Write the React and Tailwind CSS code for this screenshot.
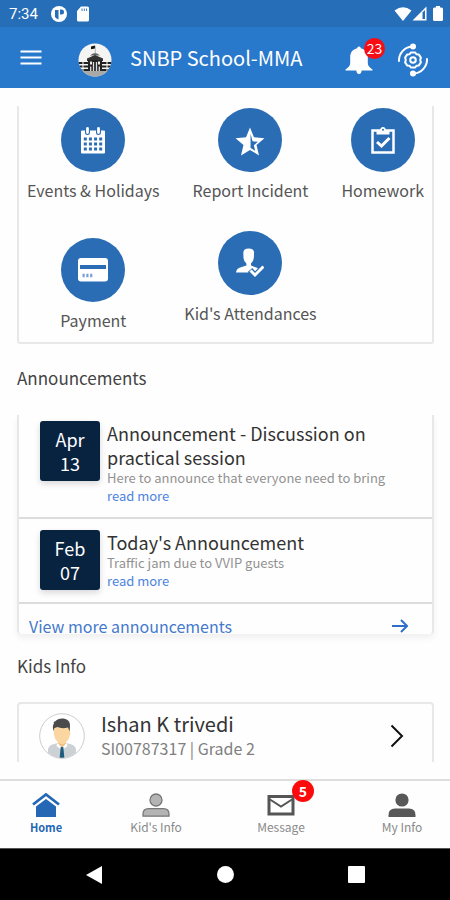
import React from "react";

function StatusBar() {
  return (
    <div className="flex h-[27px] shrink-0 items-center bg-[#276eb8] pl-[9px] pr-[7px] text-white">
      <span className="w-[42px] font-['Roboto',sans-serif] text-[15px] leading-5">7:34</span>
      <svg className="h-4 w-4" viewBox="0 0 16 16" aria-hidden="true">
        <circle cx="8" cy="8" r="8" fill="#fff" />
        <path d="M4 4h3.500v9.500A5.500 5.500 0 0 1 4 11z" fill="#276eb8" />
        <path d="M9 3.500h1.500a2.500 2.500 0 0 1 0 5H9z" fill="#276eb8" />
      </svg>
      <svg className="ml-[10px] h-4 w-3" viewBox="0 0 12 16" aria-hidden="true">
        <path d="M4 0.500h6.500a1.500 1.500 0 0 1 1.500 1.500v12a1.500 1.500 0 0 1-1.500 1.500h-9A1.500 1.500 0 0 1 0 14V5z" fill="#fff" />
        <path d="M5 2.500v2.500M7.300 2.500v2.500M9.600 2.500v2.500" stroke="#276eb8" strokeWidth="0.900" />
      </svg>
      <div className="ml-auto flex items-center">
        <svg className="h-[14px] w-[18px]" viewBox="0 0 18 14" aria-hidden="true">
          <path d="M9 14L0.500 3.500Q9-3 17.500 3.500z" fill="#fff" />
        </svg>
        <svg className="h-[15px] w-[15px]" viewBox="0 0 15 15" aria-hidden="true">
          <path d="M0.500 14.500L14.500 0.500v14z" fill="#fff" />
          <path d="M10.500 6.500l2.500-2.500v9h-2.500z" fill="#276eb8" />
        </svg>
        <svg className="ml-[6px] h-[15px] w-[10px]" viewBox="0 0 10 15" aria-hidden="true">
          <path d="M3 0h4v1.500h1.500A1.500 1.500 0 0 1 10 3v10.500A1.500 1.500 0 0 1 8.500 15h-7A1.500 1.500 0 0 1 0 13.500V3a1.500 1.500 0 0 1 1.500-1.500H3z" fill="#fff" />
        </svg>
      </div>
    </div>
  );
}

function SchoolLogo() {
  return (
    <svg className="ml-9 mt-1 h-[34px] w-[34px]" viewBox="0 0 34 34" role="img" aria-label="School logo">
      <defs>
        <clipPath id="logo-clip"><circle cx="17" cy="17" r="16.500" /></clipPath>
      </defs>
      <g clipPath="url(#logo-clip)">
        <rect width="34" height="34" fill="#f4f4f2" />
        <rect y="28" width="34" height="6" fill="#a9a9a6" />
        <path d="M13 3.500l4-1V5.500l-4 0.800z" fill="#111" />
        <path d="M17.300 3v7" stroke="#999" strokeWidth="0.700" />
        <path d="M12 12.500q5-5 10 0z" fill="#666" />
        <path d="M9 15.500l8-3.500 8 3.500v2.500H9z" fill="#333" />
        <rect x="10" y="17" width="14" height="11" fill="#222" />
        <path d="M0 20h10M24 20h10M1 23.500h9M24 23.500h9M2 27h8M24 27h8" stroke="#222" strokeWidth="2" />
        <path d="M5 19v9M29 19v9" stroke="#f4f4f2" strokeWidth="1" />
        <rect x="12" y="18.500" width="2" height="3" fill="#eee" />
        <rect x="20" y="18.500" width="2" height="3" fill="#eee" />
        <path d="M15.500 19v9M18.500 19v9M12.700 23.500v4.500M21.300 23.500v4.500" stroke="#ddd" strokeWidth="1.300" />
      </g>
    </svg>
  );
}

function Header() {
  return (
    <header className="flex h-[61px] shrink-0 items-center bg-[#2878cc] pl-5 pr-[22px] text-white">
      <button type="button" aria-label="Menu">
        <svg className="h-[18px] w-[22px]" viewBox="0 0 22 18">
          <path d="M0.500 2.500h21M0.500 8.500h21M0.500 14.500h21" stroke="#fff" strokeWidth="2.200" />
        </svg>
      </button>
      <SchoolLogo />
      <h1 className="ml-[18px] text-[20px] leading-7">SNBP School-MMA</h1>
      <button type="button" aria-label="Notifications, 23 new" className="relative ml-auto">
        <svg className="mt-1 h-7 w-7" viewBox="0 0 28 28">
          <path d="M14 0.500c1.200 0 1.700 0.700 1.700 1.800 4.600 0.900 7.100 4.300 7.100 9v5.700c0 2.800 1.800 4.500 4.700 6.500v1H0.500v-1c2.900-2 4.700-3.700 4.700-6.500v-5.700c0-4.700 2.500-8.100 7.100-9 0-1.100 0.500-1.800 1.700-1.800zM11.300 24h5.400q-0.200 3.900-2.700 3.900t-2.700-3.900z" fill="#fff" />
        </svg>
        <span className="absolute -top-1 left-[19px] flex h-[21px] w-[21px] items-center justify-center rounded-full bg-[#f80d14] text-[14px] leading-5">23</span>
      </button>
      <button type="button" aria-label="Settings" className="ml-[25px]">
        <svg className="mt-1 h-[34px] w-[30px]" viewBox="0 0 30 34" fill="none" stroke="#fff" strokeWidth="2">
          <path d="M1 18A14 14 0 0 1 14 3.500M29 16A14 14 0 0 1 16 30.500" strokeLinecap="round" />
          <circle cx="15" cy="3.500" r="3" fill="#fff" stroke="none" />
          <circle cx="15" cy="30.500" r="3" fill="#fff" stroke="none" />
          <path d="M12.800 9.500h4.400l1.200 1.800 2.300 0.100 2.200 3.200-0.700 2.400 0.700 2.400-2.200 3.200-2.300 0.100-1.200 1.800h-4.400l-1.200-1.800-2.300-0.100-2.200-3.200 0.700-2.400-0.700-2.400 2.200-3.200 2.300-0.100z" strokeLinejoin="round" />
          <circle cx="15" cy="17" r="2.800" />
        </svg>
      </button>
    </header>
  );
}

const CalendarIcon = () => (
  <svg className="-ml-px h-7 w-6" viewBox="0 0 24 28" aria-hidden="true">
    <path d="M1 4.500h22a1 1 0 0 1 1 1V26.500a1 1 0 0 1-1 1H1a1 1 0 0 1-1-1v-21a1 1 0 0 1 1-1z" fill="#fff" />
    <path d="M6.500 2.500v4M17.500 2.500v4" stroke="#2a6db4" strokeWidth="5" strokeLinecap="round" />
    <path d="M6.500 2.500v4M17.500 2.500v4" stroke="#fff" strokeWidth="2.800" strokeLinecap="round" />
    <path d="M2.800 13h18.400M2.800 18h18.400M2.800 23h18.400" stroke="#2a6db4" strokeWidth="3" strokeDasharray="3 2.130" />
  </svg>
);

const StarIcon = () => (
  <svg className="mt-1 h-[30px] w-[30px]" viewBox="0 0 28 28" aria-hidden="true">
    <path
      d="M14 0.500l3.700 9 9.800 0.900-7.400 6.500 2.300 9.600L14 21.400l-8.400 5.100 2.300-9.600L0.500 10.400l9.800-0.900zM14.500 6.500v13l4.300 2.600-1.200-5 3.800-3.300-5-0.400z"
      fill="#fff"
      fillRule="evenodd"
    />
  </svg>
);

const ClipboardIcon = () => (
  <svg className="h-7 w-6" viewBox="0 0 24 28" aria-hidden="true">
    <rect x="1.500" y="4.500" width="21" height="22" fill="none" stroke="#fff" strokeWidth="2.500" />
    <path d="M5.500 8.500V4.500h3.500q0.300-3.500 3-3.500t3 3.500h3.500v4z" fill="#fff" />
    <circle cx="12" cy="3.800" r="1" fill="#2a6db4" />
    <path d="M6 16l4.500 4 8-8" fill="none" stroke="#fff" strokeWidth="3" />
  </svg>
);

const CardIcon = () => (
  <svg className="h-6 w-[30px]" viewBox="0 0 30 24" aria-hidden="true">
    <rect width="30" height="23.500" rx="3" fill="#fff" />
    <rect x="2" y="7" width="26" height="4" fill="#2a6db4" />
    <path d="M4.500 17.500h9.800" stroke="#7c9fda" strokeWidth="3.600" strokeDasharray="2.200 1.600" />
  </svg>
);

const AttendanceIcon = () => (
  <svg className="h-[30px] w-7" viewBox="0 0 28 30" aria-hidden="true">
    <path d="M7.300 4.500Q7.500 0.500 12.700 0.500t5.400 4l-0.300 5.500q-0.500 4-2.800 5.500v2l6 2.300q2.500 1.200 3.200 4.700H0q0.500-3.700 3.500-4.800l6.900-2.200v-2Q8 14 7.500 10z" fill="#fff" />
    <path d="M14 22l5 5.500L28.500 18" fill="none" stroke="#2a6db4" strokeWidth="6" />
    <path d="M14.500 22.500l4.500 4.500L27.500 18.500" fill="none" stroke="#fff" strokeWidth="3" />
  </svg>
);

function Tile({ label, children }) {
  return (
    <button type="button" className="flex flex-col items-center text-[#555]">
      <span className="flex h-16 w-16 items-center justify-center rounded-full bg-[#2a6db4]">{children}</span>
      <span className="mt-[6px] text-[16px] leading-6">{label}</span>
    </button>
  );
}

function Announcement({ month, day, title, body }) {
  return (
    <article className="flex gap-[7px] border-b-2 border-[#dcdcdc] pb-3 pl-[21px] pr-9">
      <time className="flex h-[60px] w-[60px] shrink-0 flex-col items-center justify-center rounded-[3px] bg-[#08233f] text-[18px] leading-6 text-white shadow-[0_3px_6px_rgba(0,0,0,0.15)]">
        <span>{month}</span>
        <span>{day}</span>
      </time>
      <div>
        <h3 className="text-[18px] leading-6 text-[#333]">{title}</h3>
        <p className="text-[13px] leading-[18px] text-[#929292]">{body}</p>
        <a href="#read" className="block text-[13px] leading-[18px] text-[#4c83e0]">read more</a>
      </div>
    </article>
  );
}

function Avatar() {
  return (
    <svg className="h-[46px] w-[46px] shrink-0" viewBox="0 0 46 46" role="img" aria-label="Ishan K trivedi">
      <defs>
        <clipPath id="avatar-clip"><circle cx="23" cy="23" r="21.800" /></clipPath>
      </defs>
      <circle cx="23" cy="23" r="22.300" fill="#fff" stroke="#ccc" strokeWidth="1" />
      <g clipPath="url(#avatar-clip)">
        <path d="M9 46V36q1-4 6-5l6-1.500h4l6 1.500q5 1 6 5v10z" fill="#ccd1d5" />
        <path d="M19 26h8v5l-4 4-4-4z" fill="#efc184" />
        <path d="M15 14h16v5q1 1 0 3-1 5-4 7.500-4 3-8 0-3-2.500-4-7.500-1-2 0-3z" fill="#fbd6a0" />
        <path d="M14.500 18.500q-1.500-6 0.500-8-1-2 1-2 3-3.500 8.500-3 6 1 6.500 6 0 3.500-0.500 7l-1.500-4q-6.500 1.500-10.500-0.500-2.500 0.500-3.500 1.500z" fill="#4b4b4b" />
        <path d="M18.500 30l4.500 5 4.500-5 1 3-4 3h-3l-4-3z" fill="#fff" />
        <path d="M21.700 34h2.600l1.200 12h-5z" fill="#1f5c7d" />
      </g>
    </svg>
  );
}

const HomeIcon = () => (
  <svg className="h-6 w-7" viewBox="0 0 28 24" aria-hidden="true">
    <path d="M1 11.500L14 1.500l13 10" fill="none" stroke="#2468b5" strokeWidth="2.800" />
    <path d="M4 13.500l10-7.500 10 7.500V24H4z" fill="#2468b5" />
  </svg>
);

const KidIcon = () => (
  <svg className="h-6 w-7" viewBox="0 0 28 24" fill="#b4b4b4" stroke="#777" strokeWidth="1.300" aria-hidden="true">
    <circle cx="14" cy="7" r="6" />
    <path d="M1 23.200v-2q0-5.500 5.500-5.500h15q5.500 0 5.500 5.500v2z" />
  </svg>
);

const MailIcon = () => (
  <svg className="h-6 w-7" viewBox="0 0 28 24" fill="none" stroke="#555" strokeWidth="3" aria-hidden="true">
    <rect x="2" y="3.500" width="24" height="17.500" />
    <path d="M3 6.500l11 7 11-7" strokeWidth="2" />
  </svg>
);

const PersonIcon = () => (
  <svg className="h-6 w-7" viewBox="0 0 28 24" fill="#585858" aria-hidden="true">
    <circle cx="14" cy="7" r="6.600" />
    <path d="M0.500 24v-2q0-6.500 6.500-6.500h14q6.500 0 6.500 6.500v2z" />
  </svg>
);

function NavItem({ label, active, badge, children }) {
  return (
    <a href="#nav" className="relative flex w-16 flex-col items-center">
      {children}
      <span className={active ? "text-[11px] font-bold leading-5 text-[#2468b5]" : "text-[12px] leading-5 text-[#8a8a8a]"}>{label}</span>
      {badge && (
        <span className="absolute -top-[13px] left-[43px] flex h-[22px] w-[22px] items-center justify-center rounded-full bg-[#fb0b0b] text-[14px] font-bold leading-5 text-white">{badge}</span>
      )}
    </a>
  );
}

export default function App() {
  return (
    <div className="flex h-screen flex-col bg-[#fefefe] font-['Noto_Sans_CJK_SC',sans-serif]">
      <StatusBar />
      <Header />

      <main className="mb-[17px] min-h-0 flex-1 overflow-hidden pl-[17px] pr-4 pt-[18px]">
        <section className="grid grid-cols-[auto_auto_auto] justify-between rounded-b-[3px] border-x-2 border-b-2 border-[#e8e8e8] px-2 pb-[10px] pt-[2px]">
          <Tile label="Events &amp; Holidays"><CalendarIcon /></Tile>
          <Tile label="Report Incident"><StarIcon /></Tile>
          <Tile label="Homework"><ClipboardIcon /></Tile>
          <div className="flex justify-center pt-9">
            <Tile label="Payment"><CardIcon /></Tile>
          </div>
          <div className="flex items-start justify-center pt-[29px]">
            <Tile label="Kid's Attendances"><AttendanceIcon /></Tile>
          </div>
        </section>

        <h2 className="mt-[22px] text-[17px] leading-6 text-[#444]">Announcements</h2>
        <section className="mt-[25px] h-[219px] overflow-hidden rounded-b-[4px] border-x-2 border-[#e8e8e8] pt-[6px] shadow-[0_4px_6px_rgba(0,0,0,0.06)]">
          <Announcement
            month="Apr"
            day="13"
            title="Announcement - Discussion on practical session"
            body="Here to announce that everyone need to bring"
          />
          <div className="pt-[11px]">
            <Announcement month="Feb" day="07" title="Today's Announcement" body="Traffic jam due to VVIP guests" />
          </div>
          <a href="#more" className="flex items-center justify-between pl-[10px] pr-6 pt-[10px] text-[16px] leading-6 text-[#4479cc]">
            View more announcements
            <svg className="h-[14px] w-4" viewBox="0 0 16 14" fill="none" stroke="#2f6fca" strokeWidth="2" aria-hidden="true">
              <path d="M0 7h15M9 1l6 6-6 6" />
            </svg>
          </a>
        </section>

        <h2 className="mt-5 text-[17px] leading-6 text-[#444]">Kids Info</h2>
        <section className="mt-6 rounded-[4px] border-2 border-[#e8e8e8]">
          <a href="#kid" className="flex items-center pb-6 pl-5 pr-7 pt-2">
            <Avatar />
            <div className="ml-4">
              <h3 className="text-[20px] leading-6 text-[#333]">Ishan K trivedi</h3>
              <p className="text-[16px] leading-6 text-[#808080]">SI00787317 | Grade 2</p>
            </div>
            <svg className="ml-auto h-6 w-[14px]" viewBox="0 0 14 24" fill="none" stroke="#111" strokeWidth="2" aria-hidden="true">
              <path d="M1.500 1.500L12 12 1.500 22.500" />
            </svg>
          </a>
        </section>
      </main>

      <nav className="grid shrink-0 grid-cols-[92fr_128fr_122fr_108fr] justify-items-center border-t-2 border-[#dedede] pb-[11px] pt-3">
        <NavItem label="Home" active><HomeIcon /></NavItem>
        <NavItem label="Kid's Info"><KidIcon /></NavItem>
        <NavItem label="Message" badge="5"><MailIcon /></NavItem>
        <div className="pl-3">
          <NavItem label="My Info"><PersonIcon /></NavItem>
        </div>
      </nav>

      <div className="flex h-[52px] shrink-0 items-center justify-between border-t border-[#555] bg-black px-[85px]">
        <button type="button" aria-label="Back">
          <svg className="h-[18px] w-[18px]" viewBox="0 0 18 18"><path d="M17 0v18L1 9z" fill="#fff" /></svg>
        </button>
        <button type="button" aria-label="Home screen" className="h-[17px] w-[17px] rounded-full bg-white" />
        <button type="button" aria-label="Recent apps" className="h-[17px] w-[17px] rounded-[1px] bg-white" />
      </div>
    </div>
  );
}
